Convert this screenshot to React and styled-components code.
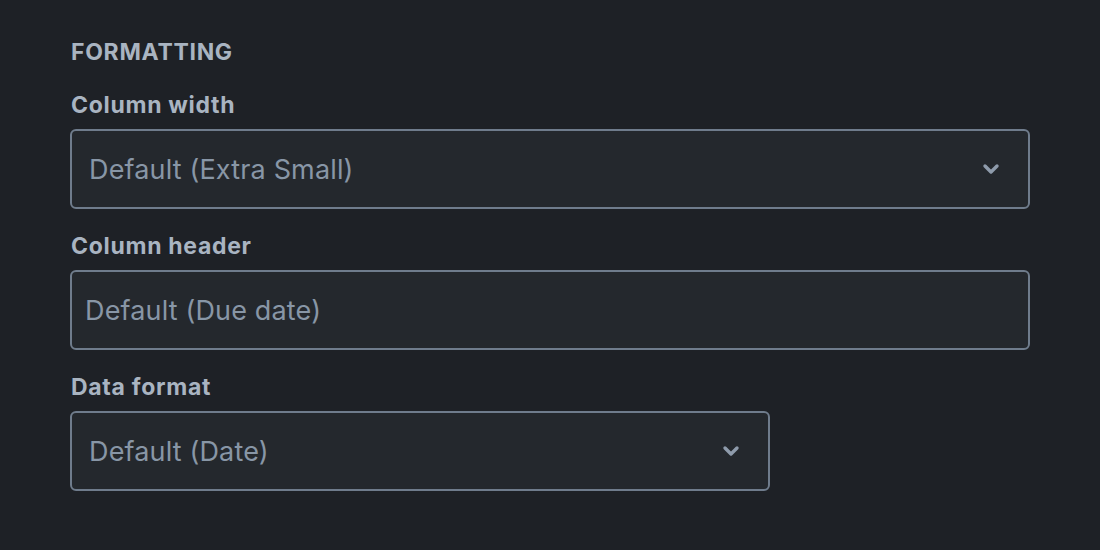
import React from 'react'
import styled, { createGlobalStyle } from 'styled-components'

const GlobalStyle = createGlobalStyle`
  html, body {
    margin: 0;
    background: #1e2126;
    font-family: Inter, "Noto Sans", sans-serif;
  }
`

const Panel = styled.div`
  padding: 38px 70px 40px 70px;
  display: flex;
  flex-direction: column;
`

const Heading = styled.h3`
  margin: 0 0 26px 1px;
  font-size: 23px;
  line-height: 28px;
  font-weight: 700;
  color: #a9b4c1;
  letter-spacing: 0.7px;
`

const Field = styled.div`
  display: flex;
  flex-direction: column;
  margin-bottom: 24px;
`

const Label = styled.label`
  font-size: 23px;
  line-height: 26px;
  font-weight: 700;
  color: #a9b4c1;
  letter-spacing: 0.7px;
  margin: 0 0 11px 1px;
`

const Box = styled.div`
  box-sizing: border-box;
  width: ${p => p.width}px;
  height: 80px;
  border: 2px solid #6f7c8c;
  border-radius: 6px;
  background: #24282d;
  display: flex;
  align-items: center;
  justify-content: space-between;
  padding: 0 27px 0 ${p => (p.select ? 17 : 13)}px;
`

const Value = styled.span`
  font-size: 27px;
  color: #8896a6;
  letter-spacing: 0.15px;
`

const Chevron = () => (
  <svg width="20" height="14" viewBox="0 0 20 14">
    <path d="M4 4l6 6 6-6" fill="none" stroke="#8e9bab" strokeWidth="3.4" strokeLinecap="round" strokeLinejoin="round" />
  </svg>
)

export default function App() {
  return (
    <>
      <GlobalStyle />
      <Panel>
        <Heading>FORMATTING</Heading>
        <Field>
          <Label>Column width</Label>
          <Box width={960} select>
            <Value>Default (Extra Small)</Value>
            <Chevron />
          </Box>
        </Field>
        <Field>
          <Label>Column header</Label>
          <Box width={960}>
            <Value>Default (Due date)</Value>
          </Box>
        </Field>
        <Field>
          <Label>Data format</Label>
          <Box width={700} select>
            <Value>Default (Date)</Value>
            <Chevron />
          </Box>
        </Field>
      </Panel>
    </>
  )
}
